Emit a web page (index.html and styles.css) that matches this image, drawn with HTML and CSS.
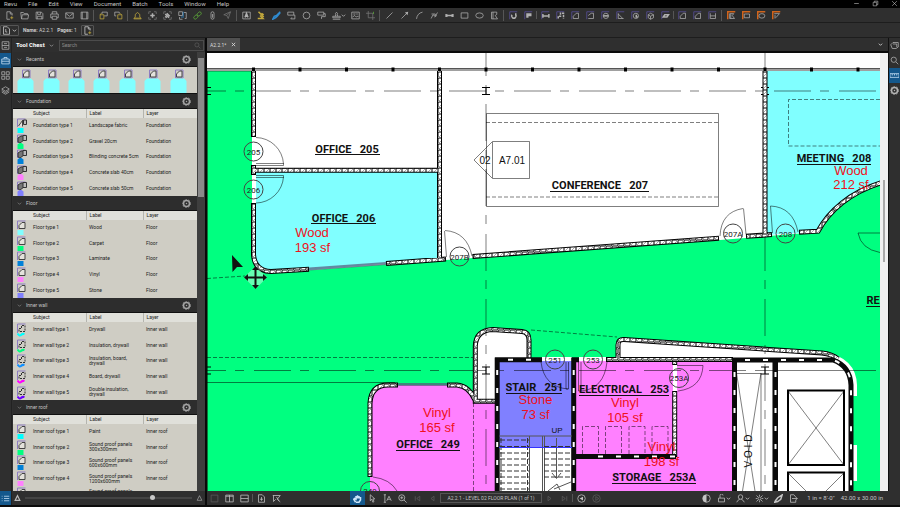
FILE: index.html
```html
<!DOCTYPE html>
<html lang="en">
<head>
<meta charset="utf-8">
<meta name="viewport" content="width=device-width, initial-scale=1">
<title>A2.2.1 - Revu</title>
<link rel="stylesheet" href="styles.css">
</head>
<body>
<svg class="defs" aria-hidden="true">
  <symbol id="new" viewBox="0 0 12 12"><path d="M7 1H2.500v10h4M7 1l2.500 2.500V6M7 1v3h2.500"/><path class="y" d="M9 7v4M7 9h4"/></symbol>
  <symbol id="open" viewBox="0 0 12 12"><path d="M2 10.500L1 2h3.500l1 1.500H10V5M2 10.500L3 5h8.500l-1 5.500z"/></symbol>
  <symbol id="save" viewBox="0 0 12 12"><path d="M1.500 1.500h7l2 2v7h-9zM3.500 1.500v3h4v-3M3 10.500V7h6v3.500"/></symbol>
  <symbol id="print" viewBox="0 0 12 12"><path d="M3 4V1h6v3M3 9H1V4h10v5H9M3 7h6v4H3z"/></symbol>
  <symbol id="mail" viewBox="0 0 12 12"><path d="M1 2.500h10v7H1zM1 3l5 4 5-4"/></symbol>
  <symbol id="panel" viewBox="0 0 12 12"><path d="M1.500 1.500h9v9h-9zM3 1.500v9M9 1.500v9"/></symbol>
  <symbol id="undo" viewBox="0 0 12 12"><path d="M4 1.500h7v5H7M4 1.500V4"/><path class="y" d="M1.500 5h5v5.500h-5zM3 3L1.500 5"/></symbol>
  <symbol id="redo" viewBox="0 0 12 12"><path d="M1 6.500v-5h6v2M1 6.500h2"/><path class="y" d="M5 5h5.500v5.500H5zM8 3l2 2"/></symbol>
  <symbol id="bell" viewBox="0 0 12 12"><path class="y" d="M1 10.500h10L9 8V4.500L6 2 3 4.500V8zM1.500 9.500h9"/></symbol>
  <symbol id="plus" viewBox="0 0 12 12"><path class="dim" d="M1 4V1h3M8 1h3v3M11 8v3H8M4 11H1V8"/><path class="b" d="M6 3v6M3 6h6"/></symbol>
  <symbol id="snap" viewBox="0 0 12 12"><path class="dim" d="M1 4V1h3M8 1h3v3M11 8v3H8M4 11H1V8"/><path class="b" d="M3 4l5 5M5 3l4 4M3 7l2 2"/></symbol>
  <symbol id="grid" viewBox="0 0 12 12"><path d="M1 1h5v5H1zM8 2h3v8H9M2 8v3h4"/><path class="bl" d="M7 1v6M4 8h4"/></symbol>
  <symbol id="link" viewBox="0 0 12 12"><g class="gr"><rect x="0" y="4" width="6" height="4" rx="2" transform="rotate(-45 3 6) translate(-1 2)"/><rect x="6" y="4" width="6" height="4" rx="2" transform="rotate(-45 9 6) translate(1 -2)"/></g></symbol>
  <symbol id="clip" viewBox="0 0 12 12"><path d="M4 3v6a2 2 0 0 0 4 0V3a1.500 1.500 0 0 0-4 0M6 4v5"/></symbol>
  <symbol id="send" viewBox="0 0 12 12"><path class="dim" d="M1 5l9-4-3 9-2-4zM5 6l5-5"/></symbol>
  <symbol id="textbox" viewBox="0 0 12 12"><path d="M1 1.500h10v9H1z"/><path class="b" d="M4 8.500L6 3.500l2 5M5 7h2"/></symbol>
  <symbol id="hilite" viewBox="0 0 12 12"><path class="y b" d="M2 1l7 7M4 6l4 4H1M6 3l3 2"/></symbol>
  <symbol id="pen" viewBox="0 0 12 12"><path class="bl b" d="M11 1L6 6l-3 1-2 4 4-2 2-2 4-5M6 5l2 2"/></symbol>
  <symbol id="callout" viewBox="0 0 12 12"><path d="M1 1.500h8v4H1zM9 5.500h1.500v5H5l1.500-2"/></symbol>
  <symbol id="circle" viewBox="0 0 12 12"><circle cx="6" cy="6" r="4.500"/></symbol>
  <symbol id="note" viewBox="0 0 12 12"><path d="M1 1.500h8v4H1zM9 3.500h2v4H6v3"/></symbol>
  <symbol id="stamp" viewBox="0 0 12 12"><path d="M1 7h10v2H1zM1 11h10M4.500 7L5 5C3 1 9 1 7 5l.5 2"/></symbol>
  <symbol id="image" viewBox="0 0 12 12"><path d="M1 1.500h10v9H1zM2 8l3-2 2 2 2-1 1 1M3 4h3M8 3v2"/></symbol>
  <symbol id="crop" viewBox="0 0 12 12"><path class="dim" d="M3 0v9h9M0 3h9v9"/><path class="gr" d="M10 1v3"/></symbol>
  <symbol id="line" viewBox="0 0 12 12"><path d="M2 10l8-8"/></symbol>
  <symbol id="arrow" viewBox="0 0 12 12"><path d="M2 10l7-7"/><path class="f" d="M6.500 2L11 1l-1 4.500z"/></symbol>
  <symbol id="arc" viewBox="0 0 12 12"><path d="M2 10.500Q3 3 10 1.500"/></symbol>
  <symbol id="poly" viewBox="0 0 12 12"><path d="M1.500 10L4 5l3 2 3-5M2 4h5v2M6 8l3-2"/></symbol>
  <symbol id="dim" viewBox="0 0 12 12"><path class="b" d="M1.500 4v4M10.500 4v4M2 6h8M4 5L2.500 6 4 7M8 5l1.500 1L8 7"/></symbol>
  <symbol id="rect" viewBox="0 0 12 12"><path d="M1.500 2.500h9v7h-9z"/></symbol>
  <symbol id="ellipse" viewBox="0 0 12 12"><ellipse cx="6" cy="6" rx="5" ry="3.500"/></symbol>
  <symbol id="polygon" viewBox="0 0 12 12"><path d="M2 1.500h7v3L7 6l3 4.500H2zM4 1.500v9"/></symbol>
  <symbol id="frame" viewBox="0 0 12 12"><path d="M1 11V1h10"/></symbol>
  <symbol id="m-rot" viewBox="0 0 12 12"><use href="#frame" class="v"/><path class="b" d="M4 5a3 3 0 1 0 5 0M9 3v3"/></symbol>
  <symbol id="m-cal" viewBox="0 0 12 12"><use href="#frame" class="v"/><path class="b" d="M3 4h7M3 6h7M3 8h3"/></symbol>
  <symbol id="m-len" viewBox="0 0 12 12"><use href="#frame" class="v"/><path class="b" d="M2.500 4v5M10.500 4v5M3 6.500h7"/></symbol>
  <symbol id="m-poly" viewBox="0 0 12 12"><use href="#frame" class="v"/><path class="b" d="M3 10V7h3V3h4v7" stroke-dasharray="3 1"/></symbol>
  <symbol id="m-area" viewBox="0 0 12 12"><use href="#frame" class="v"/><path d="M3 10V7l4-4h3v7z"/></symbol>
  <symbol id="m-per" viewBox="0 0 12 12"><use href="#frame" class="v"/><path d="M3 6l4-3h3v7H3"/></symbol>
  <symbol id="m-dia" viewBox="0 0 12 12"><use href="#frame" class="v"/><circle cx="6.500" cy="6.500" r="3.500"/><path class="b" d="M3 6.500h7"/></symbol>
  <symbol id="m-ang" viewBox="0 0 12 12"><use href="#frame" class="v"/><path d="M3 3v7h7M3 4l6 6"/></symbol>
  <symbol id="m-rad" viewBox="0 0 12 12"><use href="#frame" class="v"/><circle cx="6.500" cy="6.500" r="3.500"/><path class="b" d="M7 5v3h2"/></symbol>
  <symbol id="m-vol" viewBox="0 0 12 12"><use href="#frame" class="v"/><path d="M3 5l3-2 4 2v4l-4 2-3-2zM3 5l3 2 4-2M6 7v4"/></symbol>
  <symbol id="m-cnt" viewBox="0 0 12 12"><use href="#frame" class="v"/><path class="b" d="M3 8l2-3h5L8 8z"/></symbol>
  <symbol id="m-tab" viewBox="0 0 12 12"><use href="#frame" class="v"/><path d="M3 3v7h7V3M3 6.500h7"/></symbol>
  <symbol id="o-poly" viewBox="0 0 12 12"><use href="#frame" class="o"/><path d="M3.500 3.500H9L7 6l3 4H3.500zM5 4v6"/></symbol>
  <symbol id="o-rect" viewBox="0 0 12 12"><use href="#frame" class="o"/><path d="M3 4h7v5H3z"/></symbol>
  <symbol id="o-ell" viewBox="0 0 12 12"><use href="#frame" class="o"/><ellipse cx="6.500" cy="6.500" rx="4" ry="3"/></symbol>
  <symbol id="o-cut" viewBox="0 0 12 12"><use href="#frame" class="o"/><path d="M3 3.500h7L5 9M4 5v5"/></symbol>
  <symbol id="chev" viewBox="0 0 12 12"><path d="M2 4l4 4 4-4"/></symbol>
  <symbol id="gear" viewBox="0 0 12 12"><circle cx="6" cy="6" r="4" stroke-width="2"/><circle cx="6" cy="6" r="5.500" stroke-dasharray="2 2"/><circle class="f" cx="6" cy="6" r="1"/></symbol>
  <symbol id="search" viewBox="0 0 12 12"><circle cx="5" cy="5" r="3.500"/><path d="M8 8l3 3"/></symbol>
  <symbol id="page" viewBox="0 0 12 12"><path d="M2 1h5l3 3v7H2zM5 4v4h2"/></symbol>
  <symbol id="thumbs" viewBox="0 0 12 12"><path d="M1.500 1h9v10h-9zM1.500 6h9M4 3.500h4M4 8.500h4"/></symbol>
  <symbol id="chest" viewBox="0 0 12 12"><path d="M1 4h10v6.500H1zM4 4V2h4v2M1 7h10"/></symbol>
  <symbol id="tiles" viewBox="0 0 12 12"><path d="M1 1h4v4H1zM7 1h4v4H7zM1 7h4v4H1zM7 7h4v4H7z"/></symbol>
  <symbol id="layers" viewBox="0 0 12 12"><path d="M6 1l5 3-5 3-5-3zM1 6l5 3 5-3M1 8l5 3 5-3"/></symbol>
  <symbol id="list" viewBox="0 0 12 12"><path d="M4 3h7M4 6h7M4 9h7M1 3h1M1 6h1M1 9h1"/></symbol>
  <symbol id="hill" viewBox="0 0 12 12"><path d="M2 10l4-8 4 8z"/></symbol>
  <symbol id="cube" viewBox="0 0 12 12"><path d="M1 5l3-3h7v6l-3 2H3zM4 4h5v4"/></symbol>
  <symbol id="ruler" viewBox="0 0 12 12"><path d="M0 3.500h12v5H0zM3 4v2M6 4v2M9 4v2"/></symbol>
  <symbol id="sq" viewBox="0 0 12 12"><path d="M1.500 1.500h9v9h-9z"/></symbol>
  <symbol id="vsplit" viewBox="0 0 12 12"><path d="M1 1.500h10v9H1zM6 1.500v9M1 3h10"/></symbol>
  <symbol id="hsplit" viewBox="0 0 12 12"><path d="M1 1.500h10v9H1zM1 6h10"/></symbol>
  <symbol id="sync" viewBox="0 0 12 12"><path d="M2 1h5l3 3v7H2zM6 4v5M4 7h4"/></symbol>
  <symbol id="unsync" viewBox="0 0 12 12"><path d="M1 2h10M2 2v8l3-3M11 2L7 7l4 3.500M6 4l3 5"/></symbol>
  <symbol id="hand" viewBox="0 0 12 12"><path class="b" d="M3.500 11L1 7l1-1 2 1V3M4 6V2.500M6 6V1.500M8 6V2.500M10 4v4l-2 3H4"/></symbol>
  <symbol id="pick" viewBox="0 0 12 12"><path d="M3 1v8l2-2 1.500 4L8 10 6.500 6.500H9z"/></symbol>
  <symbol id="tsel" viewBox="0 0 12 12"><path d="M1 1h3M2.500 1v10M1 11h3M5 9l3-6 3 6M6 7h4"/></symbol>
  <symbol id="zoomin" viewBox="0 0 12 12"><circle cx="5" cy="5" r="4"/><path d="M8 8l3.500 3.500M3 5h4M5 3v4"/></symbol>
  <symbol id="first" viewBox="0 0 12 12"><path d="M3 3v6M9 3L5 6l4 3z"/></symbol>
  <symbol id="prev" viewBox="0 0 12 12"><path d="M8 3L4 6l4 3z"/></symbol>
  <symbol id="next" viewBox="0 0 12 12"><path d="M4 3l4 3-4 3z"/></symbol>
  <symbol id="last" viewBox="0 0 12 12"><path d="M9 3v6M3 3l4 3-4 3z"/></symbol>
  <symbol id="back" viewBox="0 0 12 12"><circle cx="6" cy="6" r="5"/><path class="f" d="M8 3.500v5L3.500 6z"/></symbol>
  <symbol id="fwd" viewBox="0 0 12 12"><circle cx="6" cy="6" r="5"/><path d="M5 3.500v5L9 6z"/></symbol>
  <symbol id="half" viewBox="0 0 12 12"><circle cx="6" cy="6" r="5"/><path class="f" d="M6 1a5 5 0 0 0 0 10z"/></symbol>
  <symbol id="lock" viewBox="0 0 12 12"><path d="M2 5.500h8v5H2zM4 5.500V2a2 2 0 0 1 4 0"/></symbol>
  <symbol id="user" viewBox="0 0 12 12"><circle cx="6" cy="4" r="3"/><path d="M1 11q1-3 4-4M11 11q-1-3-4-4"/></symbol>
  <symbol id="sun" viewBox="0 0 12 12"><circle cx="6" cy="6" r="2"/><path d="M6 1v2M6 9v2M1 6h2M9 6h2M2 2l2 2M8 8l2 2M10 2L8 4M4 8l-2 2"/></symbol>
  <symbol id="brush" viewBox="0 0 12 12"><path class="b" d="M11 1L5 5 2 9l-1 2 4-1 4-3z"/></symbol>
  <symbol id="export" viewBox="0 0 12 12"><path d="M9 4L6.500 1H2v10h7V8M4 6h7M9 4l2 2-2 2"/></symbol>
  <symbol id="close" viewBox="0 0 12 12"><path d="M2 2l8 8M10 2l-8 8"/></symbol>
  <symbol id="min" viewBox="0 0 12 12"><path d="M2 6h8"/></symbol>
  <symbol id="max" viewBox="0 0 12 12"><path d="M2 4h6v6H2zM4 4V2h6v6H8"/></symbol>
  <!-- Tool chest entries -->
  <symbol id="t-area" viewBox="0 0 10 15"><path class="tv" d="M.5 9V1h8"/><path class="tk" d="M2 8.500V5.500L5 2.500h3v6z"/><path class="tc" d="M.5 10h6v5h-6z"/></symbol>
  <symbol id="t-vol" viewBox="0 0 10 15"><path class="tv" d="M.5 9V1h8"/><path class="td" d="M1 8V4l3-2h3v4L3 9z"/><path class="tb" d="M6 1.500h3.500v5H6z"/><path class="tc" d="M.5 10.500l2-1.500h2l2 1.500V15h-6z"/></symbol>
  <symbol id="t-fnd" viewBox="0 0 10 15"><path class="tv" d="M.5 9V1h8"/><path class="tk" d="M1.500 8l4-5.500v6M5 2.500h3"/><path class="tb" d="M6.500 2H9.500v4.500H6.500z"/><path class="tc" d="M.5 10h6v5h-6z"/></symbol>
  <symbol id="t-len" viewBox="0 0 10 15"><path class="tv" d="M.5 11V2h8"/><path class="tw" d="M2 9.500V6.500h2.500v-3H8v6z"/><path class="tl" d="M.5 11.500q2 3 3.500 1.500t3.500-1"/></symbol>
  <symbol id="t-house" viewBox="0 0 17 25"><path class="tv" d="M5.500 10V2h7.500v8z"/><path class="tk" d="M6.500 9V6l3-3h2.500v6z"/><path class="tc" d="M.5 25V13L3 10.500h11L16.500 13v12z"/></symbol>
</svg>

<nav class="menubar" aria-label="Main menu">
  <button>Revu</button><button>File</button><button>Edit</button><button>View</button><button>Document</button><button>Batch</button><button>Tools</button><button>Window</button><button>Help</button>
  <div class="window-controls"><button aria-label="Minimize"><svg><use href="#min"/></svg></button><button aria-label="Restore"><svg><use href="#max"/></svg></button><button aria-label="Close"><svg><use href="#close"/></svg></button></div>
</nav>

<div class="toolbar" role="toolbar" aria-label="Tools">
  <button aria-label="New"><svg><use href="#new"/></svg></button><button aria-label="Open"><svg><use href="#open"/></svg></button><button aria-label="Save"><svg><use href="#save"/></svg></button><button aria-label="Print"><svg><use href="#print"/></svg></button><button aria-label="Email"><svg><use href="#mail"/></svg></button><button aria-label="Panels"><svg><use href="#panel"/></svg></button>
  <i class="sep"></i>
  <button aria-label="Undo"><svg><use href="#undo"/></svg></button><button aria-label="Redo"><svg><use href="#redo"/></svg></button>
  <i class="sep"></i>
  <button aria-label="Alerts"><svg><use href="#bell"/></svg></button><button aria-label="Add"><svg><use href="#plus"/></svg></button><button aria-label="Snapshot"><svg><use href="#snap"/></svg></button><button aria-label="Grid"><svg><use href="#grid"/></svg></button><button aria-label="Hyperlink"><svg><use href="#link"/></svg></button><button aria-label="Attach"><svg><use href="#clip"/></svg></button><button aria-label="Send"><svg><use href="#send"/></svg></button>
  <i class="sep"></i>
  <button aria-label="Text box"><svg><use href="#textbox"/></svg></button><button aria-label="Highlight"><svg><use href="#hilite"/></svg></button><button aria-label="Pen"><svg><use href="#pen"/></svg></button><button aria-label="Callout"><svg><use href="#callout"/></svg></button><button aria-label="Cloud"><svg><use href="#circle"/></svg></button><button aria-label="Note"><svg><use href="#note"/></svg></button><button class="wide" aria-label="Stamp"><svg><use href="#stamp"/></svg><svg class="tiny"><use href="#chev"/></svg></button><button aria-label="Image"><svg><use href="#image"/></svg></button><button aria-label="Crop"><svg><use href="#crop"/></svg></button>
  <i class="sep"></i>
  <button aria-label="Line"><svg><use href="#line"/></svg></button><button aria-label="Arrow"><svg><use href="#arrow"/></svg></button><button aria-label="Arc"><svg><use href="#arc"/></svg></button><button aria-label="Polyline"><svg><use href="#poly"/></svg></button><button aria-label="Dimension"><svg><use href="#dim"/></svg></button><button aria-label="Rectangle"><svg><use href="#rect"/></svg></button><button aria-label="Ellipse"><svg><use href="#ellipse"/></svg></button><button aria-label="Polygon"><svg><use href="#polygon"/></svg></button>
  <i class="sep"></i>
  <button aria-label="Measure"><svg><use href="#m-rot"/></svg></button><button aria-label="Calibrate"><svg><use href="#m-cal"/></svg></button>
  <i class="sep thin"></i>
  <button aria-label="Length"><svg><use href="#m-len"/></svg></button><button aria-label="Polylength"><svg><use href="#m-poly"/></svg></button><button aria-label="Area"><svg><use href="#m-area"/></svg></button><button aria-label="Perimeter"><svg><use href="#m-per"/></svg></button><button aria-label="Diameter"><svg><use href="#m-dia"/></svg></button><button aria-label="Angle"><svg><use href="#m-ang"/></svg></button><button aria-label="Radius"><svg><use href="#m-rad"/></svg></button><button aria-label="Volume"><svg><use href="#m-vol"/></svg></button><button aria-label="Count"><svg><use href="#m-cnt"/></svg></button>
  <i class="sep thin"></i>
  <button aria-label="Dynamic fill"><svg><use href="#m-area"/></svg></button><button aria-label="Sketch area"><svg><use href="#m-area"/></svg></button><button aria-label="Sketch table"><svg><use href="#m-tab"/></svg></button>
  <i class="sep"></i>
  <button aria-label="Polygon cutout"><svg><use href="#o-poly"/></svg></button><button aria-label="Rectangle cutout"><svg><use href="#o-rect"/></svg></button><button aria-label="Ellipse cutout"><svg><use href="#o-ell"/></svg></button><button aria-label="Cutout"><svg><use href="#o-cut"/></svg></button>
</div>

<div class="properties">
  <button class="boxed" aria-label="Page"><svg><use href="#page"/></svg><svg class="tiny"><use href="#chev"/></svg></button>
  <span><b>Name:</b> A2.2.1</span><span><b>Pages:</b> 1</span>
  <button class="boxed" aria-label="Page setup"><svg><use href="#new"/></svg></button>
</div>

<main class="workspace">
  <div class="rail left">
    <button aria-label="Thumbnails"><svg><use href="#thumbs"/></svg></button><button class="on" aria-label="Tool Chest"><svg><use href="#chest"/></svg></button><button aria-label="Sets"><svg><use href="#tiles"/></svg></button><button aria-label="Layers"><svg><use href="#layers"/></svg></button>
    <button class="on last" aria-label="Markups list"><svg><use href="#list"/></svg></button>
  </div>

  <aside class="chest">
    <div class="chest-head">
      <button class="title">Tool Chest <svg class="tiny"><use href="#chev"/></svg></button>
      <label class="search"><input type="search" placeholder="Search" aria-label="Search tools"><svg><use href="#search"/></svg></label>
    </div>
    <div class="chest-body">
      <div class="sets">
        <section>
          <h2><svg class="tiny"><use href="#chev"/></svg>Recents<button aria-label="Recents options"><svg><use href="#gear"/></svg></button></h2>
          <div class="recents">
            <svg class="cyan"><use href="#t-house"/></svg><svg class="cyan"><use href="#t-house"/></svg><svg class="cyan"><use href="#t-house"/></svg><svg class="cyan"><use href="#t-house"/></svg><svg class="cyan"><use href="#t-house"/></svg><svg class="cyan"><use href="#t-house"/></svg><svg class="cyan"><use href="#t-house"/></svg>
          </div>
        </section>
        <section>
          <h2><svg class="tiny"><use href="#chev"/></svg>Foundation<button aria-label="Foundation options"><svg><use href="#gear"/></svg></button></h2>
          <table>
            <thead><tr><th></th><th>Subject</th><th>Label</th><th>Layer</th></tr></thead>
            <tbody>
              <tr><td><svg class="aqua"><use href="#t-fnd"/></svg></td><td>Foundation type 1</td><td>Landscape fabric</td><td>Foundation</td></tr>
              <tr><td><svg class="green"><use href="#t-vol"/></svg></td><td>Foundation type 2</td><td>Gravel 20cm</td><td>Foundation</td></tr>
              <tr><td><svg class="blue"><use href="#t-vol"/></svg></td><td>Foundation type 3</td><td>Blinding concrete 5cm</td><td>Foundation</td></tr>
              <tr><td><svg class="pink"><use href="#t-vol"/></svg></td><td>Foundation type 4</td><td>Concrete slab 40cm</td><td>Foundation</td></tr>
              <tr><td><svg class="violet"><use href="#t-vol"/></svg></td><td>Foundation type 5</td><td>Concrete slab 50cm</td><td>Foundation</td></tr>
            </tbody>
          </table>
        </section>
        <section>
          <h2><svg class="tiny"><use href="#chev"/></svg>Floor<button aria-label="Floor options"><svg><use href="#gear"/></svg></button></h2>
          <table>
            <thead><tr><th></th><th>Subject</th><th>Label</th><th>Layer</th></tr></thead>
            <tbody>
              <tr><td><svg class="cyan"><use href="#t-area"/></svg></td><td>Floor type 1</td><td>Wood</td><td>Floor</td></tr>
              <tr><td><svg class="green"><use href="#t-area"/></svg></td><td>Floor type 2</td><td>Carpet</td><td>Floor</td></tr>
              <tr><td><svg class="blue"><use href="#t-area"/></svg></td><td>Floor type 3</td><td>Laminate</td><td>Floor</td></tr>
              <tr><td><svg class="pink"><use href="#t-area"/></svg></td><td>Floor type 4</td><td>Vinyl</td><td>Floor</td></tr>
              <tr><td><svg class="violet"><use href="#t-area"/></svg></td><td>Floor type 5</td><td>Stone</td><td>Floor</td></tr>
            </tbody>
          </table>
        </section>
        <section>
          <h2><svg class="tiny"><use href="#chev"/></svg>Inner wall<button aria-label="Inner wall options"><svg><use href="#gear"/></svg></button></h2>
          <table>
            <thead><tr><th></th><th>Subject</th><th>Label</th><th>Layer</th></tr></thead>
            <tbody>
              <tr><td><svg class="aqua"><use href="#t-len"/></svg></td><td>Inner wall type 1</td><td>Drywall</td><td>Inner wall</td></tr>
              <tr><td><svg class="green"><use href="#t-len"/></svg></td><td>Inner wall type 2</td><td>Insulation, drywall</td><td>Inner wall</td></tr>
              <tr><td><svg class="sky"><use href="#t-len"/></svg></td><td>Inner wall type 3</td><td>Insulation, board, drywall</td><td>Inner wall</td></tr>
              <tr><td><svg class="magenta"><use href="#t-len"/></svg></td><td>Inner wall type 4</td><td>Board, drywall</td><td>Inner wall</td></tr>
              <tr><td><svg class="purple"><use href="#t-len"/></svg></td><td>Inner wall type 5</td><td>Double insulation, drywall</td><td>Inner wall</td></tr>
            </tbody>
          </table>
        </section>
        <section>
          <h2><svg class="tiny"><use href="#chev"/></svg>Inner roof<button aria-label="Inner roof options"><svg><use href="#gear"/></svg></button></h2>
          <table>
            <thead><tr><th></th><th>Subject</th><th>Label</th><th>Layer</th></tr></thead>
            <tbody>
              <tr><td><svg class="aqua"><use href="#t-area"/></svg></td><td>Inner roof type 1</td><td>Paint</td><td>Inner roof</td></tr>
              <tr><td><svg class="green"><use href="#t-area"/></svg></td><td>Inner roof type 2</td><td>Sound proof panels 300x300mm</td><td>Inner roof</td></tr>
              <tr><td><svg class="blue"><use href="#t-area"/></svg></td><td>Inner roof type 3</td><td>Sound proof panels 600x600mm</td><td>Inner roof</td></tr>
              <tr><td><svg class="pink"><use href="#t-area"/></svg></td><td>Inner roof type 4</td><td>Sound proof panels 1200x600mm</td><td>Inner roof</td></tr>
              <tr><td><svg class="violet"><use href="#t-area"/></svg></td><td>Inner roof type 5</td><td>Sound proof panels 1200x1200mm</td><td>Inner roof</td></tr>
            </tbody>
          </table>
        </section>
      </div>
      <div class="scroll"><i></i></div>
    </div>
    <div class="sizer">
      <svg class="tiny"><use href="#hill"/></svg>
      <input type="range" min="0" max="100" value="77" aria-label="Symbol size">
      <svg><use href="#hill"/></svg>
    </div>
  </aside>

  <div class="document">
    <div class="doc-row">
      <div class="doc-main">
        <div class="tabs"><button class="tab">A2.2.1* <svg class="tiny"><use href="#close"/></svg></button><svg class="tiny more"><use href="#chev"/></svg></div>
        <div class="canvas">
          <svg class="plan" viewBox="207 53 673 438" preserveAspectRatio="xMinYMin slice" role="img" aria-label="Level 02 floor plan">
            <defs>
              <pattern id="hatch" width="6" height="6" patternUnits="userSpaceOnUse"><rect width="6" height="6" fill="#fff"/><path class="hatch-line" d="M0 6L6 0"/></pattern>
            </defs>
            <!-- floor fills -->
            <path class="carpet" d="M207 71H253V256Q254 273 271 273L446 260L720 240L818 232C829 213 850 192 880 184V491H207z"/>
            <path class="wood" d="M254 171H439V259L309 270L271 272Q255 271 254 256z"/>
            <path class="wood" d="M766 71H880V183C850 192 829 212 817 232L766 235z"/>
            <path class="vinyl" d="M370 491V403Q370 385 388 385H458Q469 387 475 401H497V491z"/>
            <path class="vinyl" d="M574 360H734V491H574z"/>
            <path class="paper" d="M475 402V346Q476 329 493 329L522 331Q530 332 530 340V360H497V402z"/>
            <path class="paper" d="M617 360V344Q617 338 623 338L825 352Q856 358 857 385V396H853V445H857V481H853V491H734V360z"/>
            <path class="carpet" d="M852 396H862V445H852z"/>
            <path class="stone" d="M497 360H573V447H497z"/>
            <path class="paper" d="M497 447H573V491H497z"/>
            <path class="paper" d="M252 137h4v28h-4zM252 175h4v28h-4zM542 357h30v4h-30zM579 357h28v4h-28zM673 365h4v26h-4z"/>
            <path class="edge" d="M207 71H253M207.500 71V491"/>

            <!-- exterior glazing -->
            <path class="glaze" d="M207 69.500H880"/>
            <path class="glaze-top" d="M207 68.500H880"/>
            <path class="mullion" d="M252 69.500H881" stroke-dasharray="3 43.500"/>

            <!-- column grid -->
            <g class="gridline" stroke-dasharray="37 9 9 10">
              <path d="M189 91H880"/><path d="M189 370.500H760"/><path d="M486 39V491M765 39V491"/>
            </g>
            <path class="gridline" d="M760 370.500H876"/>
            <path class="dashed" d="M207 357.500H473M207 278.500L245 276M531 330L617 337M473.500 403V491"/>
            <path class="thin" d="M207 382.500H395"/>
            <path class="column" d="M482 87.500h8M482 94.500h8M486 87.500v7M761 87.500h8M761 94.500h8M207 87.500h4M207 94.500h4M482 367h8M482 374h8M486 367v7M761 367h8M761 374h8M765 367v7M207 367h4M207 374h4"/>

            <!-- conference and meeting furniture -->
            <path class="thin" d="M486.500 113.500H718.500V206.500H486.500zM492.500 141.500H529.500V178.500H492.500zM492 142L474 160L492 178"/>
            <path class="dashed" d="M486 122.500H718M486 197H718M880 99.500H788.500V146H880"/>
            <path class="dashed" d="M582.500 454V426.500h16V454M605.500 454V426.500h16V454M629 454V426.500h16V454M652 454V426.500h16V454"/>

            <!-- partitions -->
            <g class="wall">
              <path d="M253.500 71V137M439.500 71V259M253.500 165V175M255 170.300H438M253.500 203V255Q255 271 271 271.500L309 269.300M386 263.500L446 259M472.500 256.500L719 238.300M746 236.300L772 234.600M765 71V235M799 232.300L818 231.200C829 211 850 192 882 182.500"/>
              <path d="M370 477V403Q371 385 388 385H398M447 385H457Q469 386 475 400M496 401.300H475.300V346Q476 330 493 329.500L522 331.500Q529 332 529 340V358M733 359.500H606M618 358V345Q618 339 624 339.500L822 353Q832 354 838 359M674.700 361V365M674.700 391V457"/>
            </g>
            <g class="wall-in">
              <path d="M253.500 71V136M439.500 71V258M253.500 166V174M255 170.300H438M253.500 204V255Q255 271 271 271.500L308 269.300M387 263.400L445 259M473.500 256.400L718 238.300M747 236.200L771 234.600M765 71V234M800 232.200L818 231.200C829 211 850 192 882 182.500"/>
              <path d="M370 476V403Q371 385 388 385H397M448 385H457Q469 386 475 400M496 401.300H475.300V346Q476 330 493 329.500L522 331.500Q529 332 529 340V358M733 359.500H607M618 358V345Q618 339 624 339.500L822 353Q832 354 838 359M674.700 362V364M674.700 392V456"/>
            </g>
            <path class="window" d="M309 269L386 263.500M398 384.500H447"/>

            <!-- core walls -->
            <g class="core">
              <path d="M497.200 357.500V491M573.700 357.500V491M495 359.700H542M572 359.700H579M576 456.500H676M734.500 358V491M775.500 358V491M733 360H833Q850 366 851 385V491"/>
            </g>
            <g class="core-in">
              <path d="M497.200 370V491M573.700 370V491M508 359.700H542M598 456.500H676M734.500 372V491M775.500 372V491M745 360H833Q850 366 851 385V491"/>
            </g>
            <path class="shaft" d="M788 390.500H844V465H788zM788 491V472.500H844V491"/>
            <path class="thin" d="M788 391L844 465M844 391L788 465M788 473L806 491M844 473L826 491M737 373.500H761V491M736.500 373L755 491M761 373L742.500 491M772.500 362V491"/>

            <!-- stair -->
            <path class="stair-rail" d="M499 436H572M529.500 436V491M542.500 436V491M544.500 436V491M556.500 438V478M552 473L556.500 478.500L561 473M548 491L557 484L560 490M554 489L571 482"/>
            <path class="tread" d="M500 440H529M500 446.500H529M500 453H529M500 459H529M500 465H529M500 471H529M500 477H529M500 483H529M500 489H529M544 446.500H571M544 453H571M544 459H571M544 465H571M544 471H571M544 477H571M527.500 438V491M501 438V491"/>
            <path class="blue-edge" d="M499 447.500H572"/>

            <!-- doors -->
            <path class="thin" d="M256 163.500H283.500V165.500H256M256 137.500A28 28 0 0 1 283.500 164M256 175.500H283.500V177.500H256M283.500 177A28 28 0 0 1 256 203M444.500 231L446.500 257M445 230.500Q467 232 472 256M743.500 208.500L746 234M743 208.500Q721 212 720 236M770.500 206L772.500 233M770.500 206Q793 207 798 232M880 233H858Q861 249 880 252.500M568.500 362V389H566V362M541 362Q544 387 568 389M578.500 362V391H581V362M607 362Q604 389 581 391M677 365.500H703Q702 388 678 391M373 477Q390 479 397 491"/>
            <g class="tag">
              <circle cx="253.500" cy="151.500" r="9.500"/><circle cx="253.500" cy="189.500" r="9.500"/><circle cx="459.500" cy="256.500" r="9.500"/><circle cx="733" cy="233.500" r="9.500"/><circle cx="785.500" cy="233.500" r="9.500"/><circle cx="555" cy="359.500" r="9.500"/><circle cx="593" cy="359.500" r="9.500"/><circle cx="679" cy="378" r="9.500"/><circle cx="370" cy="491" r="9.500"/>
            </g>
            <g class="tag-text">
              <text x="253.500" y="154.500">205</text><text x="253.500" y="192.500">206</text><text x="459.500" y="259.500">207B</text><text x="733" y="236.500">207A</text><text x="785.500" y="236.500">208</text><text x="555" y="362.500">251</text><text x="593" y="362.500">253</text><text x="679" y="381">253A</text><text x="370" y="494">249</text>
            </g>
            <g class="ref-text"><text x="485" y="164">02</text><text x="512" y="164">A7.01</text><text x="557" y="433" class="small">UP</text><text transform="translate(752 451) rotate(-90)">V O I D</text></g>

            <g class="room">
              <text x="347" y="153">OFFICE   205</text><text x="343.500" y="222">OFFICE   206</text><text x="600" y="189">CONFERENCE   207</text><text x="834" y="162">MEETING   208</text><text x="428" y="448">OFFICE   249</text><text x="534.500" y="391">STAIR   251</text><text x="624" y="393">ELECTRICAL   253</text><text x="654" y="481">STORAGE   253A</text><text x="873" y="304">RE</text>
            </g>
            <path class="under" d="M315 154.500H380M311 223.500H376M550 191.500H649M797 164.500H871M396 450.500H460M506 393.500H562M579 395.500H669M612 483.500H696M866 306.500H880"/>
            <g class="area">
              <text x="312" y="237">Wood</text><text x="312.500" y="252">193 sf</text><text x="851" y="175">Wood</text><text x="851" y="189">212 sf</text><text x="437" y="417">Vinyl</text><text x="437" y="432">165 sf</text><text x="535.500" y="404">Stone</text><text x="535.500" y="419">73 sf</text><text x="625" y="407">Vinyl</text><text x="625" y="422">105 sf</text><text x="661.500" y="451">Vinyl</text><text x="661.500" y="466">198 sf</text>
            </g>

            <!-- pointer and move handle -->
            <path class="pointer" d="M232 255L243 267L237 267L232.500 272z"/>
            <path class="halo" d="M255.500 266L267 277.500L255.500 289L244 277.500z"/>
            <path class="move" d="M246 277.500H265M255.500 268V287"/>
            <path class="move-head" d="M244 277.500l4-3.500v7zM267 277.500l-4-3.500v7zM255.500 266l-3.500 4h7zM255.500 289l-3.500-4h7z"/>
          </svg>
          <div class="vscroll"><i></i></div>
        </div>
      </div>
      <div class="rail right">
        <button aria-label="3D model"><svg><use href="#cube"/></svg></button><button aria-label="Search"><svg><use href="#search"/></svg></button><button class="on" aria-label="Measurements"><svg><use href="#ruler"/></svg></button><button aria-label="Properties"><svg><use href="#gear"/></svg></button>
      </div>
    </div>
    <div class="status">
      <button class="off" aria-label="Single view"><svg><use href="#sq"/></svg></button><button aria-label="Split vertical"><svg><use href="#vsplit"/></svg></button><button aria-label="Split horizontal"><svg><use href="#hsplit"/></svg></button><i class="sep thin"></i><button aria-label="Sync pages"><svg><use href="#sync"/></svg></button><button aria-label="Unsync"><svg><use href="#unsync"/></svg></button>
      <div class="pager">
        <button class="on" aria-label="Pan"><svg><use href="#hand"/></svg></button><button aria-label="Select"><svg><use href="#pick"/></svg></button><button aria-label="Select text"><svg><use href="#tsel"/></svg></button><button aria-label="Zoom"><svg><use href="#zoomin"/></svg></button><button class="off" aria-label="First page"><svg><use href="#first"/></svg></button><button class="off" aria-label="Previous page"><svg><use href="#prev"/></svg></button>
        <input type="text" value="A2.2.1 - LEVEL 02 FLOOR PLAN (1 of 1)" aria-label="Current page">
        <button class="off" aria-label="Next page"><svg><use href="#next"/></svg></button><button class="off" aria-label="Last page"><svg><use href="#last"/></svg></button><i class="sep thin"></i><button aria-label="Previous view"><svg><use href="#back"/></svg></button><button class="off" aria-label="Next view"><svg><use href="#fwd"/></svg></button>
      </div>
      <div class="info">
        <button aria-label="Dim"><svg><use href="#half"/></svg></button><button class="wide" aria-label="Lock"><svg><use href="#lock"/></svg><svg class="tiny"><use href="#chev"/></svg></button><button class="wide" aria-label="User"><svg><use href="#user"/></svg><svg class="tiny"><use href="#chev"/></svg></button><button class="wide" aria-label="Brightness"><svg><use href="#sun"/></svg><svg class="tiny"><use href="#chev"/></svg></button><button aria-label="Format painter"><svg><use href="#brush"/></svg></button><button aria-label="Export"><svg><use href="#export"/></svg></button>
        <span>1 in = 8'-0"</span><span>42.00 x 30.00 in</span>
      </div>
    </div>
  </div>
</main>
</body>
</html>
```
FILE: styles.css
```css
* { box-sizing: border-box; }

body {
  margin: 0;
  height: 100vh;
  display: flex;
  flex-direction: column;
  overflow: hidden;
  background: #2f2f2f;
  color: #d8d8d8;
  font: 5px/6px Roboto, "Liberation Sans", sans-serif;
  border-bottom: 2px solid #0c0c0c;
}

button, input {
  font: inherit;
  color: inherit;
  background: none;
  border: 0;
  margin: 0;
  padding: 0;
}

button {
  display: flex;
  align-items: center;
  justify-content: center;
}

svg {
  display: block;
  flex: none;
  width: 9px;
  height: 9px;
  fill: none;
  stroke: currentColor;
  stroke-width: 1;
}

svg.defs { position: absolute; width: 0; height: 0; }
svg.tiny { width: 5px; height: 5px; stroke-width: 2; }

.y { stroke: #c3a93c; }
.bl { stroke: #2f8bd0; }
.gr { stroke: #5fae3a; }
.v { stroke: #5a50a0; }
.o { stroke: #d0641c; stroke-width: 2; }
.b { stroke-width: 2; }
.dim { stroke: #777; }
.f { fill: currentColor; stroke: none; }

/* Menu and toolbars */
.menubar {
  display: flex;
  gap: 11px;
  height: 8px;
  padding: 0 2px 0 4px;
  background: #000;
  color: #c4c4c4;
  font-size: 6px;
  line-height: 7px;
  align-items: flex-start;
}

.window-controls { display: flex; gap: 12px; margin-left: auto; }
.window-controls svg { width: 7px; height: 7px; }

.toolbar, .properties {
  display: flex;
  align-items: center;
  height: 15px;
  background: #2f2f2f;
  border-bottom: 1px solid #1d1d1d;
  color: #b0b0b0;
}

.toolbar { padding-left: 2px; }
.toolbar button, .status button { width: 15px; height: 14px; flex: none; }
.toolbar .wide, .status .wide { width: 19px; }

.sep {
  width: 1px;
  height: 11px;
  margin: 0 2px 0 1px;
  background: #565656;
  flex: none;
}

.sep.thin { height: 8px; margin: 0 1px 0 0; }

.properties { gap: 4px; color: #d0d0d0; }
.boxed { height: 11px; padding: 0 1px; border: 1px solid #555; border-radius: 1px; gap: 1px; }

/* Workspace */
.workspace { flex: 1; min-height: 0; display: flex; }

.rail { width: 12px; flex: none; display: flex; flex-direction: column; background: #2f2f2f; color: #b4b4b4; }
.rail button { height: 15px; flex: none; }
.rail .on, .status .on { background: #14588c; color: #cde6fa; }
.rail.left { border-right: 1px solid #222; }
.rail.right { border-left: 1px solid #111; }
.rail .last { margin-top: auto; height: 14px; }

.chest { width: 195px; flex: none; display: flex; flex-direction: column; padding-left: 1px; border-right: 2px solid #0a0a0a; }
.chest-head { display: flex; align-items: center; gap: 5px; height: 14px; padding: 0 1px 0 3px; }
.title { gap: 4px; font-size: 6px; font-weight: 700; color: #fff; }
.title .tiny { stroke-width: 1; }

.search {
  flex: 1;
  display: flex;
  align-items: center;
  height: 11px;
  padding: 0 2px;
  border: 1px solid #4c4c4c;
}

.search input { flex: 1; min-width: 0; outline: 0; appearance: none; }
.search input::placeholder { color: #8b8b8b; opacity: 1; }
.search svg { width: 7px; height: 7px; color: #666; }

.chest-body { flex: 1; min-height: 0; display: flex; }
.sets { flex: 1; min-width: 0; overflow: hidden; background: #101010; }

h2 {
  display: flex;
  align-items: center;
  gap: 4px;
  height: 14px;
  margin: 0;
  padding: 0 6px 0 4px;
  background: #2d2d2d;
  font: inherit;
  color: #c4c4c4;
}

h2 .tiny { stroke-width: 1; }
h2 button { margin-left: auto; color: #a4a4a4; }

.recents {
  display: grid;
  grid-template-columns: repeat(7, 1fr);
  justify-items: center;
  height: 26px;
  margin: 1px 0;
  padding-right: 6px;
  background: #cfcdc4;
}

.recents svg { width: 17px; height: 25px; margin-top: 1px; }

table {
  width: 100%;
  height: 87px;
  margin: 1px 0 0;
  border-collapse: collapse;
  table-layout: fixed;
  background: #cfcdc4;
  color: #222;
  line-height: 5px;
}

th, td { padding: 0 0 0 3px; text-align: left; font-weight: 400; vertical-align: middle; }
thead tr { height: 9px; background: #e0e0da; }
thead th:nth-child(n+3) { border-left: 1px solid #b4b4ae; }
th:first-child { width: 17px; }
th:nth-child(2) { width: 56px; }
th:nth-child(3) { width: 57px; }
td { height: 15px; overflow: hidden; }
td:first-child { padding-left: 4px; }
td svg { width: 10px; height: 15px; }

.tv { stroke: #8c7cc0; stroke-width: 1; }
.tk { stroke: #444; stroke-width: 1; fill: #e4e2dc; }
.tw { stroke: #333; stroke-width: 1; stroke-dasharray: 2 1; }
.td { stroke: #333; fill: #777; }
.tb { stroke: #333; fill: #bbb; }
.tc { fill: currentColor; stroke: none; }
.tl { stroke: currentColor; stroke-width: 2; }

.cyan { color: #80ffff; }
.aqua { color: #00ffff; }
.green { color: #00ff80; }
.blue { color: #0080d8; }
.sky { color: #1090ff; }
.pink { color: #ff80ff; }
.magenta { color: #f0f; }
.violet { color: #8080ff; }
.purple { color: #6a00ff; }

.scroll { width: 8px; padding: 6px 1px 0; background: #3e3e3e; flex: none; }
.scroll i { display: block; height: 32%; background: #8a8a8a; }

.sizer { display: flex; align-items: center; gap: 4px; height: 14px; padding: 0 2px 0 1px; color: #bbb; }
.sizer svg { width: 7px; height: 8px; }
.sizer input { flex: 1; min-width: 0; height: 6px; appearance: none; }
.sizer input::-webkit-slider-runnable-track { height: 2px; background: #444; }
.sizer input::-webkit-slider-thumb { appearance: none; width: 5px; height: 5px; margin-top: -2px; border-radius: 50%; background: #c8c8c8; }

/* Document */
.document, .doc-main { flex: 1; min-width: 0; display: flex; flex-direction: column; }
.doc-row { flex: 1; min-height: 0; display: flex; }

.tabs { display: flex; align-items: center; height: 15px; flex: none; border-bottom: 2px solid #0a0a0a; }
.tab { height: 13px; padding: 0 4px 0 3px; gap: 5px; background: #505050; color: #ddd; }
.more { margin: 0 5px 0 auto; }

.canvas { flex: 1; min-height: 0; display: flex; background: #fff; }
.plan { flex: 1; min-width: 0; width: auto; height: 100%; background: #fff; color: #000; }
.vscroll { width: 8px; flex: none; display: flex; justify-content: center; background: #f1f1f1; }
.vscroll i { width: 2px; height: 82px; margin-top: 127px; background: #aaa; }

/* Floor plan */
.plan path { stroke: none; }
.plan .carpet { fill: #00ff80; }
.plan .wood { fill: #80ffff; }
.plan .vinyl { fill: #ff80ff; }
.plan .stone { fill: #8080ff; }
.plan .paper { fill: #fff; }
.plan .edge { stroke: #0a7a3a; stroke-width: 1; }
.plan .glaze { stroke: #a0a0a0; stroke-width: 3; }
.plan .glaze-top { stroke: #555; stroke-width: 1; }
.plan .mullion { stroke: #000; stroke-width: 4; }
.plan .gridline, .plan .gridline path { stroke: #000; stroke-opacity: .5; stroke-width: 1; }
.plan .dashed { stroke: #000; stroke-opacity: .5; stroke-width: 1; stroke-dasharray: 4 2; }
.plan .thin { stroke: #000; stroke-opacity: .5; stroke-width: 1; }
.plan .column { stroke: #000; stroke-width: 1; }
.plan .wall path { stroke: #000; stroke-width: 5; }
.plan .wall-in path { stroke: url(#hatch); stroke-width: 3; }
.plan .hatch-line { stroke: #aaa; stroke-width: 1; }
.plan .core path { stroke: #0a0a0a; stroke-width: 5; }
.plan .core-in path { stroke: #fff; stroke-width: 2; stroke-dasharray: 5 13; }
.plan .window { stroke: #557; stroke-opacity: .7; stroke-width: 3; }
.plan .shaft { stroke: #000; stroke-width: 2; }
.plan .stair-rail { stroke: #555; stroke-width: 1; }
.plan .tread { stroke: #333; stroke-width: 1; stroke-dasharray: 5 2; }
.plan .blue-edge { stroke: #33f; stroke-width: 1; }
.plan .under { stroke: #111; stroke-width: 1; }
.tag { stroke: #444; stroke-width: 1; }

.plan text {
  stroke: none;
  fill: #111;
  text-anchor: middle;
  white-space: pre;
  font-family: "Liberation Sans", sans-serif;
}

.plan .tag-text text { font-family: Roboto, sans-serif; font-size: 8px; fill: #222; }
.plan .ref-text text { font-size: 10px; }
.plan .ref-text .small { font-size: 8px; }
.plan .room text { font-family: Roboto, "Liberation Sans", sans-serif; font-size: 11px; font-weight: 700; }
.plan .area text { font-size: 13px; fill: #f01020; }

.plan .pointer { fill: #111; }
.plan .halo { fill: #fff; fill-opacity: .4; }
.plan .move { stroke: #111; stroke-width: 2; }
.plan .move-head { fill: #111; }

/* Status bar */
.status { display: flex; align-items: center; height: 14px; flex: none; background: #2f2f2f; color: #c4c4c4; }
.status .off { color: #5c5c5c; }
.pager { display: flex; align-items: center; margin-left: 66px; }
.pager input { width: 102px; height: 10px; border: 1px solid #555; text-align: center; }
.info { display: flex; align-items: center; margin-left: auto; margin-right: 17px; font-size: 6px; }
.info span { margin-left: 6px; white-space: nowrap; }
```
